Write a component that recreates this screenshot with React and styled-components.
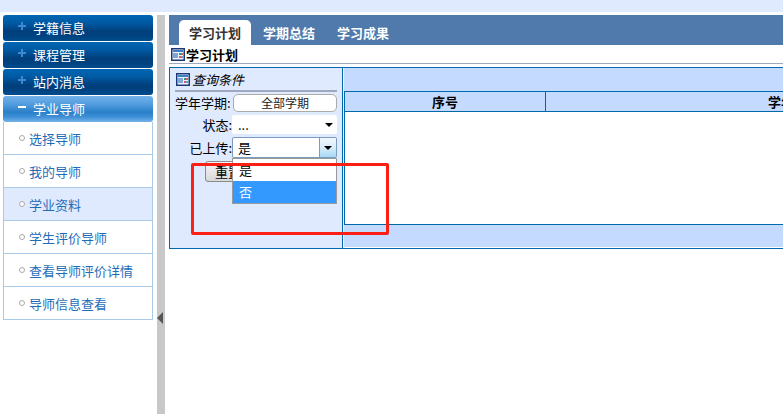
import React from "react";
import styled, { createGlobalStyle } from "styled-components";

const Global = createGlobalStyle`
  html, body { margin: 0; padding: 0; background: #fff; }
  body { font-family: "Noto Sans CJK SC", "Liberation Sans", sans-serif; font-size: 13px; color: #000; }
  * { box-sizing: border-box; }
`;

const Page = styled.div`
  position: relative;
  width: 783px;
  height: 414px;
  overflow: hidden;
  display: flex;
  flex-direction: column;
`;
const TopBar = styled.div`
  height: 12px;
  flex: none;
  background: #dfeaff;
`;
const Body = styled.div`
  flex: 1;
  min-height: 0;
  padding-top: 3px;
  display: flex;
`;
const Sidebar = styled.nav`
  width: 157px;
  flex: none;
  padding-left: 3px;
  padding-right: 4px;
`;
const MenuHead = styled.div`
  height: 26px;
  margin-bottom: 1px;
  border-radius: 3px;
  display: flex;
  align-items: center;
  color: #fff;
  font-size: 13px;
  line-height: 26px;
  background: ${(p) =>
    p.$active
      ? "linear-gradient(#74b2ea 0%, #4e9ade 35%, #2a80c8 62%, #3d8fd6 80%, #74b2ea 100%)"
      : "linear-gradient(#0066b3 0%, #005aa3 30%, #003f7c 62%, #00427f 80%, #004c8e 100%)"};
`;
const HeadIcon = styled.svg`
  width: 8px;
  height: 8px;
  margin-left: 15px;
  margin-right: 7px;
  margin-top: -4px;
  flex: none;
`;
const SubList = styled.div`
  border: 1px solid #a9c9e9;
  border-top: none;
  margin-top: -1px;
`;
const SubItem = styled.div`
  height: 33px;
  display: flex;
  align-items: center;
  padding-left: 15px;
  gap: 4px;
  color: #1f6db8;
  font-size: 13px;
  background: ${(p) => (p.$active ? "#dfeaff" : "#fff")};
  border-bottom: 1px solid #a9c9e9;
  &:last-child { border-bottom: none; height: 32px; }
`;
const Dot = styled.span`
  width: 6px;
  height: 6px;
  border-radius: 50%;
  border: 1px solid #aaa;
  background: #fff;
  flex: none;
`;
const Splitter = styled.div`
  width: 8px;
  flex: none;
  background: #c8c8c8;
  display: flex;
  padding-top: 297px;
  margin-right: 4px;
`;
const SplitArrow = styled.div`
  width: 0;
  height: 0;
  border-style: solid;
  border-width: 6px 6px 6px 0;
  border-color: transparent #555 transparent transparent;
`;
const Main = styled.main`
  flex: 1;
  min-width: 0;
`;
const TabBar = styled.div`
  height: 30px;
  background: #4f7aab;
  padding: 5px 0 0 10px;
  display: flex;
  gap: 2px;
`;
const Tab = styled.div`
  width: 72px;
  height: 25px;
  border-radius: 5px 5px 0 0;
  text-align: center;
  line-height: 26px;
  font-weight: 700;
  font-size: 13px;
  color: ${(p) => (p.$active ? "#333" : "#fff")};
  background: ${(p) => (p.$active ? "#fff" : "transparent")};
`;
const TitleRow = styled.div`
  height: 19px;
  display: flex;
  align-items: center;
  gap: 1px;
  padding-left: 2px;
  font-weight: 700;
  font-size: 13px;
  color: #000;
  border-bottom: 1px solid #a0a8c0;
`;
const Panel = styled.div`
  margin-top: 3px;
  height: 182px;
  border: 1px solid #0068ad;
  border-right: none;
  display: flex;
`;
const QueryPane = styled.div`
  position: relative;
  width: 173px;
  flex: none;
  background: #dfeaff;
  border-right: 1px solid #0068ad;
  padding: 0 5px;
`;
const QueryHead = styled.div`
  height: 24px;
  display: flex;
  align-items: center;
  gap: 2px;
  padding: 0 0 0 1px;
  font-style: italic;
  font-size: 13px;
  border-bottom: 2px solid #a0a8c0;
  margin-bottom: 2px;
`;
const FormGrid = styled.div`
  display: grid;
  grid-template-columns: 57px 105px;
  grid-auto-rows: min-content;
  row-gap: 3px;
`;
const Label = styled.label`
  font-size: 13px;
  line-height: 18px;
  text-align: right;
  white-space: nowrap;
  align-self: center;
  padding-right: ${(p) => p.$inset || 0}px;
`;
const PillField = styled.div`
  height: 18px;
  margin-left: 1px;
  border: 1px solid #aaa;
  border-radius: 5px;
  background: #fff;
  text-align: center;
  font-size: 12px;
  line-height: 16px;
  color: #222;
`;
const SelectField = styled.div`
  position: relative;
  height: ${(p) => (p.$open ? 21 : 19)}px;
  background: #fff;
  border: ${(p) => (p.$open ? "1px solid #7a9cc0" : "none")};
  border-radius: 2px;
  display: flex;
  align-items: center;
  justify-content: space-between;
  padding-left: ${(p) => (p.$open ? 5 : 6)}px;
  font-size: 13px;
`;
const PlainCaret = styled.span`
  width: 0;
  height: 0;
  margin-right: 4px;
  border-style: solid;
  border-width: 4px 4px 0 4px;
  border-color: #000 transparent transparent transparent;
`;
const CaretButton = styled.span`
  width: 17px;
  height: 19px;
  display: flex;
  align-items: center;
  justify-content: center;
  border-left: 1px solid #7a9cc0;
  background: linear-gradient(#f2f8fd 0%, #d8ecfa 50%, #a6d8f5 100%);
  &::after {
    content: "";
    border-style: solid;
    border-width: 4px 4px 0 4px;
    border-color: #000 transparent transparent transparent;
  }
`;
const DropMenu = styled.div`
  position: absolute;
  z-index: 3;
  top: 20px;
  left: -1px;
  width: 105px;
  height: 46px;
  background: #fff;
  border: 1px solid #999;
`;
const DropOption = styled.div`
  height: 22px;
  padding-left: 6px;
  line-height: 21px;
  font-size: 13px;
  color: ${(p) => (p.$active ? "#fff" : "#000")};
  background: ${(p) => (p.$active ? "#3399ff" : "#fff")};
`;
const ResetButton = styled.button`
  grid-column: 1 / 3;
  margin: 0 0 0 30px;
  width: 60px;
  height: 21px;
  border: 1px solid #8a8a8a;
  border-radius: 3px;
  padding: 0 0 0 9px;
  text-align: left;
  font-family: inherit;
  font-size: 13px;
  line-height: 19px;
  color: #000;
  background: linear-gradient(#f6f6f6, #d8d8d8);
`;
const ResultPane = styled.div`
  flex: 1;
  min-width: 0;
  background: #fff;
  padding: 0 0 1px 1px;
  display: flex;
  flex-direction: column;
`;
const Strip = styled.div`
  flex: none;
  height: ${(p) => p.$h}px;
  background: #c5daff;
`;
const TableBox = styled.div`
  flex: 1;
  min-height: 0;
  background: #fff;
  border-top: 1px solid #0068ad;
  border-bottom: 1px solid #0068ad;
  border-left: 1px solid #0068ad;
  overflow: hidden;
`;
const HeadRow = styled.div`
  width: 700px;
  height: 20px;
  display: flex;
  background: #c5daff;
  border-bottom: 1px solid #0068ad;
  font-weight: 700;
  font-size: 13px;
  line-height: 19px;
`;
const HeadCell = styled.div`
  flex: none;
  width: ${(p) => p.$w}px;
  text-align: center;
  white-space: nowrap;
  border-right: ${(p) => (p.$line ? "1px solid #0068ad" : "none")};
`;
const Annotation = styled.div`
  position: absolute;
  z-index: 5;
  left: 191px;
  top: 163px;
  width: 198px;
  height: 72px;
  border: 3px solid #fb1f14;
  border-radius: 2px;
  pointer-events: none;
`;

function WindowIcon() {
  return (
    <svg width="14" height="13" viewBox="0 0 14 13" style={{ flex: "none" }}>
      <rect x="0.75" y="0.75" width="12.5" height="11.5" fill="#eef3fb" stroke="#1d3a78" strokeWidth="1.5" />
      <rect x="2" y="2" width="10" height="2" fill="#3f7fc8" />
      <rect x="2" y="5" width="5" height="5" fill="#7ea6d8" />
      <rect x="8" y="5" width="2" height="2" fill="#2a9a6a" />
      <rect x="10" y="5" width="2" height="2" fill="#d85a5a" />
      <rect x="8" y="8" width="2" height="2" fill="#d85a5a" />
      <rect x="10" y="8" width="2" height="2" fill="#6a9ad0" />
    </svg>
  );
}

function Head({ label, active }) {
  return (
    <MenuHead $active={active}>
      <HeadIcon viewBox="0 0 8 8">
        {active ? (
          <rect x="0" y="3" width="8" height="2" fill="#fff" />
        ) : (
          <path d="M3 0h2v3h3v2H5v3H3V5H0V3h3z" fill="#4088d4" />
        )}
      </HeadIcon>
      {label}
    </MenuHead>
  );
}

const subs = ["选择导师", "我的导师", "学业资料", "学生评价导师", "查看导师评价详情", "导师信息查看"];

export default function App() {
  return (
    <Page>
      <Global />
      <TopBar />
      <Body>
        <Sidebar>
          <Head label="学籍信息" />
          <Head label="课程管理" />
          <Head label="站内消息" />
          <Head label="学业导师" active />
          <SubList>
            {subs.map((s, i) => (
              <SubItem key={s} $active={i === 2}>
                <Dot />
                {s}
              </SubItem>
            ))}
          </SubList>
        </Sidebar>
        <Splitter>
          <SplitArrow />
        </Splitter>
        <Main>
          <TabBar>
            <Tab $active>学习计划</Tab>
            <Tab>学期总结</Tab>
            <Tab>学习成果</Tab>
          </TabBar>
          <TitleRow>
            <WindowIcon />
            学习计划
          </TitleRow>
          <Panel>
            <QueryPane>
              <QueryHead>
                <WindowIcon />
                查询条件
              </QueryHead>
              <FormGrid>
                <Label $inset={2}>学年学期:</Label>
                <PillField>全部学期</PillField>
                <Label>状态:</Label>
                <SelectField>
                  ...
                  <PlainCaret />
                </SelectField>
                <Label>已上传:</Label>
                <SelectField $open>
                  是
                  <CaretButton />
                  <DropMenu>
                    <DropOption>是</DropOption>
                    <DropOption $active>否</DropOption>
                  </DropMenu>
                </SelectField>
                <ResetButton>重置</ResetButton>
              </FormGrid>
            </QueryPane>
            <ResultPane>
              <Strip $h={23} />
              <TableBox>
                <HeadRow>
                  <HeadCell $w={201} $line>序号</HeadCell>
                  <HeadCell $w={496}>学年学期</HeadCell>
                </HeadRow>
              </TableBox>
              <Strip $h={22} />
            </ResultPane>
          </Panel>
        </Main>
      </Body>
      <Annotation />
    </Page>
  );
}
